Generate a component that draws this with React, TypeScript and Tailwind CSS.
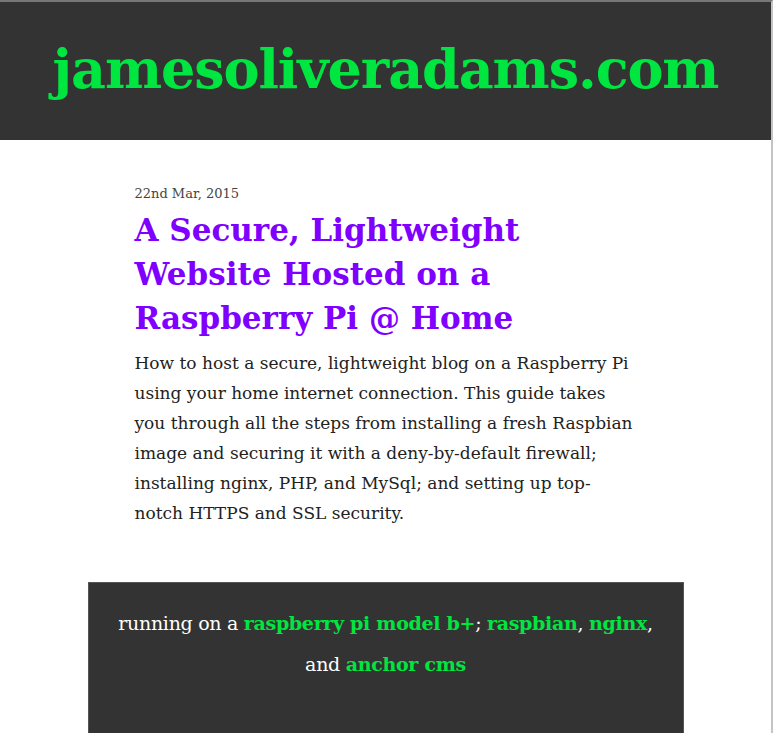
import React from 'react'

const slab = { fontFamily: '"DejaVu Serif", serif' }

export default function App() {
  return (
    <div className="min-h-[733px] bg-white border-t-2 border-t-[#777] border-r-2 border-r-[#c4c4c4]">
      <header className="bg-[#333333] h-[138px] flex items-center justify-center">
        <h1
          className="text-[#00e640] text-[54px] leading-none font-bold tracking-[-1.1px] pb-1"
          style={slab}
        >
          jamesoliveradams.com
        </h1>
      </header>

      <main className="w-[502px] mx-auto pt-[46px] pb-[54px]">
        <p className="text-[13px] text-[#444] leading-4" style={slab}>
          22nd Mar, 2015
        </p>
        <h2
          className="mt-[6px] text-[#7f00ff] text-[31px] leading-[44px] font-bold w-[420px]"
          style={slab}
        >
          A Secure, Lightweight Website Hosted on a Raspberry Pi @ Home
        </h2>
        <p className="mt-[8px] text-[17px] leading-[30px] text-[#222] w-[500px]" style={slab}>
          How to host a secure, lightweight blog on a Raspberry Pi using your home internet
          connection. This guide takes you through all the steps from installing a fresh
          Raspbian image and securing it with a deny-by-default firewall; installing nginx,
          PHP, and MySql; and setting up top-notch HTTPS and SSL security.
        </p>
      </main>

      <footer className="mx-auto w-[596px] h-[160px] bg-[#333333] border border-[#555] pt-[20px] px-2 text-center">
        <p
          className="text-[19px] leading-[41px] tracking-[-0.3px] text-white whitespace-nowrap"
          style={slab}
        >
          running on a <a className="text-[#00e640] font-bold">raspberry pi model b+</a>;{' '}
          <a className="text-[#00e640] font-bold">raspbian</a>,{' '}
          <a className="text-[#00e640] font-bold">nginx</a>,
          <br />
          and <a className="text-[#00e640] font-bold">anchor cms</a>
        </p>
      </footer>
    </div>
  )
}
